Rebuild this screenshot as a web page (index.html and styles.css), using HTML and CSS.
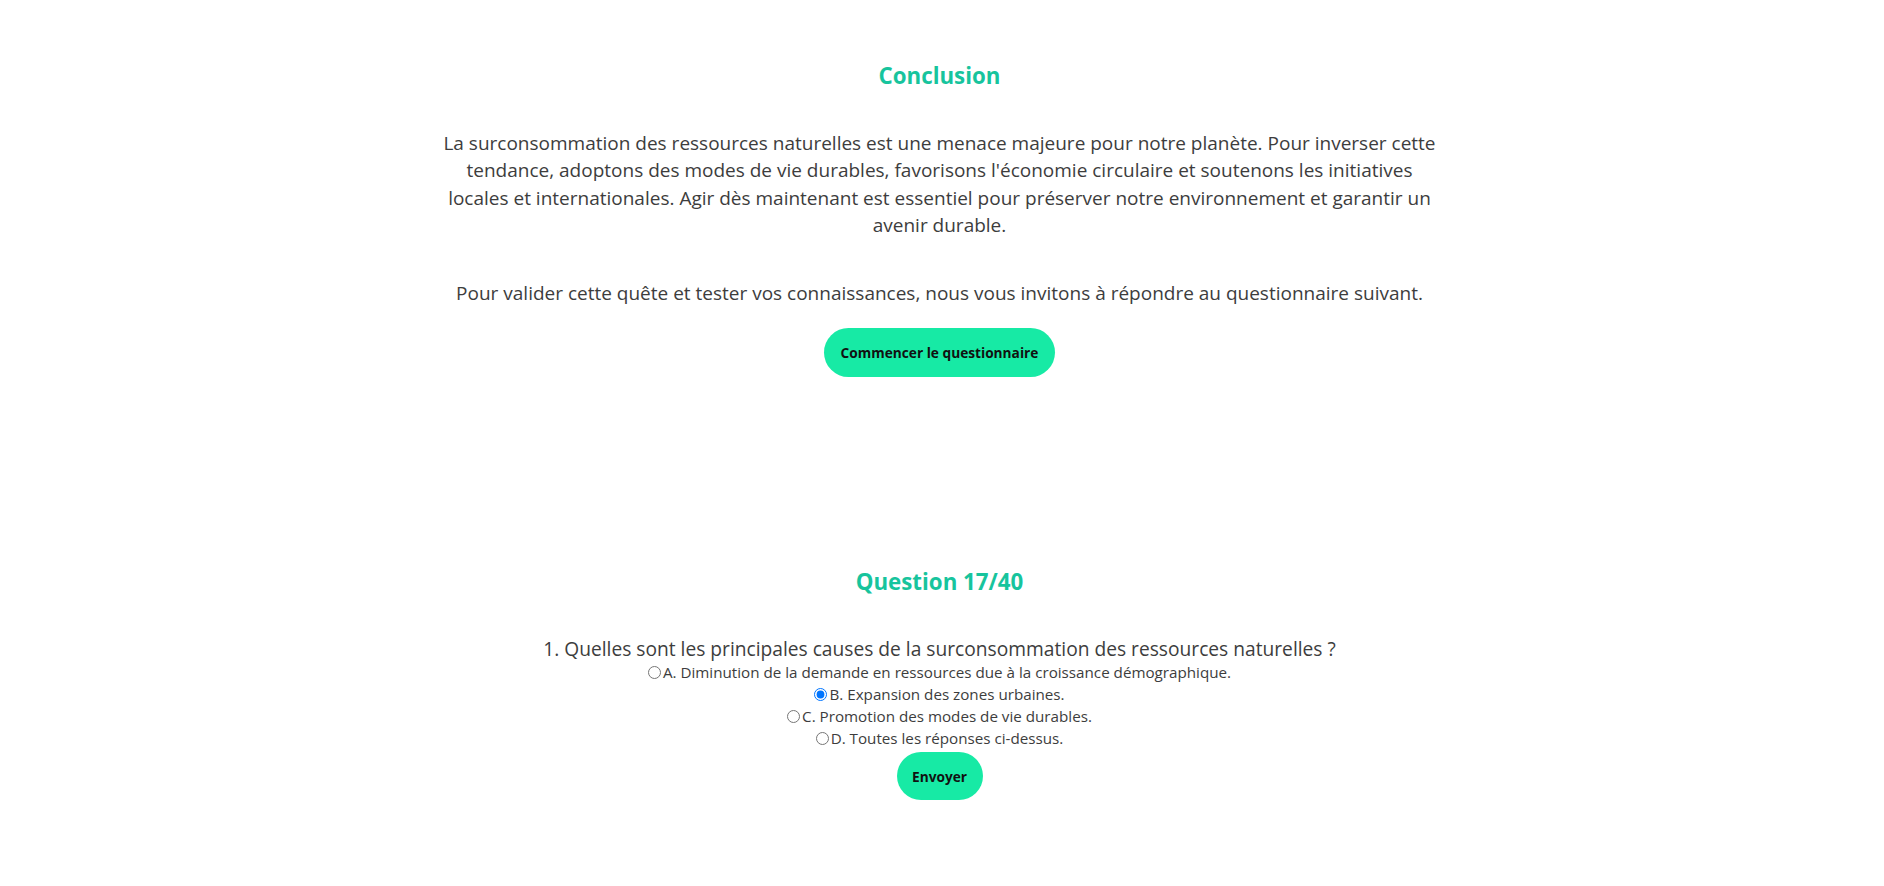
FILE: index.html
```html
<!DOCTYPE html>
<html lang="fr">
<head>
<meta charset="utf-8">
<title>Conclusion</title>
<link rel="stylesheet" href="styles.css">
</head>
<body>
<main class="page">
  <section class="conclusion">
    <h2 class="title">Conclusion</h2>
    <p class="text">La surconsommation des ressources naturelles est une menace majeure pour notre planète. Pour inverser cette tendance, adoptons des modes de vie durables, favorisons l'économie circulaire et soutenons les initiatives locales et internationales. Agir dès maintenant est essentiel pour préserver notre environnement et garantir un avenir durable.</p>
    <p class="text invite">Pour valider cette quête et tester vos connaissances, nous vous invitons à répondre au questionnaire suivant.</p>
    <button class="btn btn-start" type="button">Commencer le questionnaire</button>
  </section>

  <section class="quiz">
    <h2 class="title">Question 17/40</h2>
    <form class="quiz-form">
      <p class="question">1. Quelles sont les principales causes de la surconsommation des ressources naturelles ?</p>
      <label class="option"><input type="radio" name="q1">A. Diminution de la demande en ressources due à la croissance démographique.</label>
      <label class="option"><input type="radio" name="q1" checked>B. Expansion des zones urbaines.</label>
      <label class="option"><input type="radio" name="q1">C. Promotion des modes de vie durables.</label>
      <label class="option"><input type="radio" name="q1">D. Toutes les réponses ci-dessus.</label>
      <button class="btn btn-send" type="button">Envoyer</button>
    </form>
  </section>
</main>
</body>
</html>
```

FILE: styles.css
```css
* { box-sizing: border-box; }

body {
  margin: 0;
  background: #ffffff;
  color: #3d3d3d;
  font-family: "Open Sans", Lato, sans-serif;
}

.page {
  display: flex;
  flex-direction: column;
  align-items: center;
  padding-right: 5px;
}

.conclusion {
  width: 1000px;
  padding-top: 61px;
  display: flex;
  flex-direction: column;
  align-items: center;
  text-align: center;
}

.title {
  margin: 0;
  font-size: 22.3px;
  line-height: 30px;
  font-weight: 700;
  color: #17c49d;
}

.text {
  margin: 39px 0 0;
  font-size: 19px;
  line-height: 27.3px;
}

.invite {
  margin-top: 41px;
}

.btn {
  border: none;
  border-radius: 25px;
  background: #17eaa5;
  color: #111;
  font-family: inherit;
  font-weight: 700;
  font-size: 13.7px;
  cursor: pointer;
}

.btn-start {
  margin-top: 21px;
  width: 231px;
  height: 49px;
}

.quiz {
  margin-top: 190px;
  display: flex;
  flex-direction: column;
  align-items: center;
  text-align: center;
}

.quiz-form {
  margin-top: 40px;
  display: flex;
  flex-direction: column;
  align-items: center;
}

.question {
  margin: 0;
  font-size: 19.2px;
  line-height: 24px;
}

.option {
  display: flex;
  align-items: center;
  font-size: 15.2px;
  line-height: 22px;
}

.option input {
  margin: 0 2px 0 0;
  width: 13px;
  height: 13px;
}

.btn-send {
  margin-top: 3px;
  width: 86px;
  height: 48px;
}
```
